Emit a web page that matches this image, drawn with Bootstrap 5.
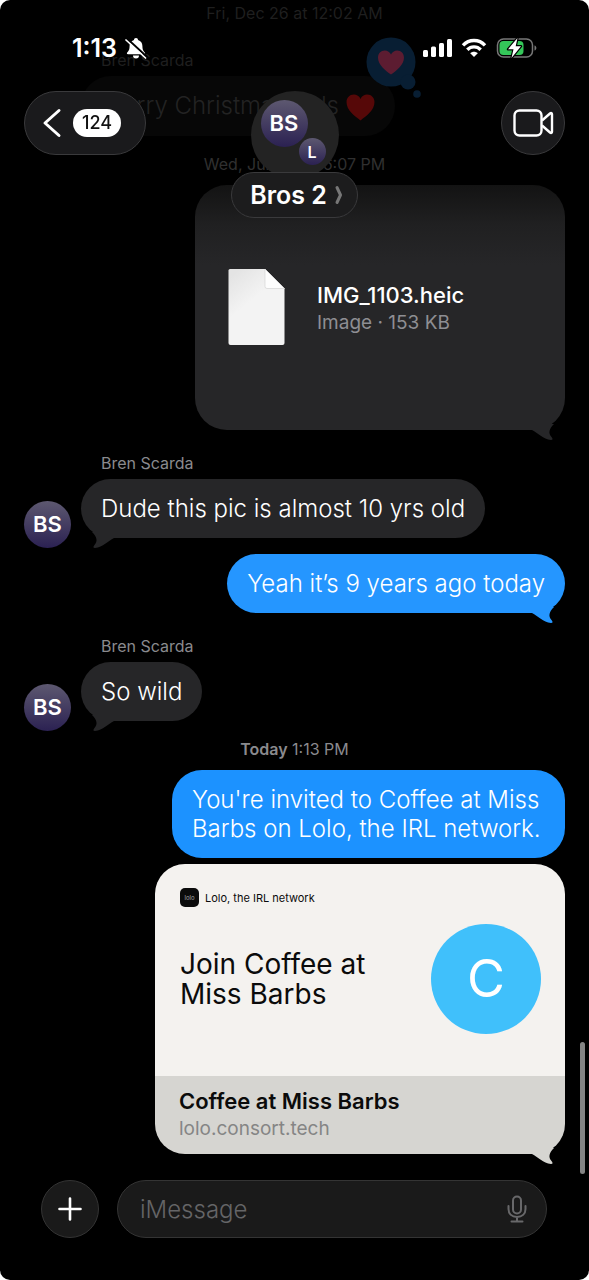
<!DOCTYPE html>
<html lang="en">
<head>
<meta charset="utf-8">
<meta name="viewport" content="width=device-width, initial-scale=1">
<title>Bros 2</title>
<link href="https://cdn.jsdelivr.net/npm/bootstrap@5.3.0/dist/css/bootstrap.min.css" rel="stylesheet">
<style>
  body { background: #fff; font-family: Inter, "Liberation Sans", sans-serif; }
  .phone { background: #000; color: #fff; border-radius: 10px; min-height: 100vh; }

  /* Floating header */
  .topbar { z-index: 3; padding-top: 36px; }
  .status { height: 24px; padding: 0 52px 0 72px; }
  .clock { font-size: 25px; line-height: 24px; font-weight: 600; }
  .navrow { display: grid; grid-template-columns: 1fr auto 1fr; align-items: start; padding: 31px 24px 0; }
  .glass { background: rgba(27, 27, 29, .96); border: 1px solid #3a3a3c; color: #fff; backdrop-filter: blur(6px); }
  .back { height: 64px; padding: 0 24px 0 16px; border-radius: 32px; }
  .count { background: #fff; color: #111; font-size: 18px; line-height: 28px; border-radius: 14px; padding: 0 9px; font-weight: 500; }
  .call { width: 64px; height: 64px; }
  .group-pic { width: 88px; height: 88px; background: #232323; }
  .group-name { height: 46px; margin-top: -7px; padding: 0 14px 0 18px; border-radius: 23px; font-size: 25px; line-height: 28px; font-weight: 600; background: #1c1c1d; }

  .initials { background: linear-gradient(#5d5870, #2b2152); color: #fff; font-weight: 600; width: 47px; height: 47px; font-size: 22px; }
  .pic-main { left: 10px; top: 9px; }
  .pic-second { left: 48px; top: 47px; width: 27px; height: 27px; font-size: 16px; }

  /* Conversation */
  .thread { padding: 3px 24px 0; }
  .stamp { margin: 18px 0 11px; font-size: 16px; line-height: 20px; color: #8a8a8e; text-align: center; }
  .sender { margin: 23px 0 6px; padding-left: 77px; font-size: 16px; line-height: 20px; color: #8a8a8e; }
  .faded { color: #1f1f1f; }
  .dim { color: #303030; }
  .line-row { gap: 10px; }
  .line-row .initials { margin-bottom: -10px; }
  .bubble { position: relative; background: #262628; border-radius: 30px; padding: 15px 20px; font-size: 24px; line-height: 29px; font-weight: 350; max-width: 77%; }
  .bubble.mine { background: #2596ff; max-width: 393px; }
  .bubble.mine.later { background: #1c92ff; }
  .bubble.old { background: #070707; color: #232323; }
  .tail { position: absolute; right: 10px; bottom: -10px; width: 26px; height: 16px; fill: #262628; }
  .tail.left { right: auto; left: 10px; transform: scaleX(-1); }
  .mine .tail { fill: #2596ff; }
  .tapback { position: absolute; right: -28px; top: -40px; }

  .filebox { position: relative; width: 370px; max-width: 75%; min-height: 245px; border-radius: 32px; padding: 0 33px; background: linear-gradient(#131313, #202021 40px, #262628 80px); color: #fff; }
  .filename { font-size: 22px; line-height: 28px; font-weight: 500; }
  .subline { font-size: 19px; line-height: 28px; color: #8e8e93; }

  .preview { position: relative; width: 410px; max-width: 76%; margin-top: 6px; color: #0b0b0b; }
  .preview .tail { fill: #d6d5d1; }
  .preview-top { background: #f4f2ef; border-radius: 30px 30px 0 0; padding: 24px 24px 42px 25px; }
  .brand { font-size: 11px; line-height: 20px; gap: 6px; }
  .brand-icon { width: 19px; height: 19px; border-radius: 5px; background: #0b0b0b; color: #aaa; font-size: 6px; }
  .invite { font-size: 28px; line-height: 30px; }
  .disc { width: 110px; height: 110px; background: #40c0fb; color: #fff; font-size: 52px; }
  .preview-foot { background: #d6d5d1; border-radius: 0 0 30px 30px; padding: 11px 24px; }
  .preview-foot .subline { color: #858585; }
  .scrollmark { right: 4px; bottom: -19px; width: 5px; height: 132px; border-radius: 3px; background: #848484; }

  /* Composer */
  .composer { padding: 25px 42px 42px 41px; gap: 18px; }
  .plus { width: 58px; height: 58px; background: #1a1a1a; border: 1px solid #343434; }
  .field { min-width: 0; height: 58px; background: #1a1a1a; border: 1px solid #343434; border-radius: 29px; padding: 0 18px 0 22px; }
  .field input { background: none; border: 0; outline: 0; color: #fff; font-size: 24px; line-height: 29px; font-weight: 350; min-width: 0; padding: 0; }
  .field input::placeholder { color: #656567; opacity: 1; }
</style>
</head>
<body>
<svg width="0" height="0" class="position-absolute" aria-hidden="true">
  <symbol id="tail" viewBox="0 0 26 16"><path d="M3 6C9 9 14 15 22 16C24 16 24 15 22.500 13C19 9 20 5 25 0L3 0Z"/></symbol>
  <symbol id="heart" viewBox="0 0 28 26"><path d="M14 25.500C8 21 .5 15.500 .5 8C.5 3.500 3.500 .5 7.500 .5C10.500 .5 13 2.200 14 4.800C15 2.200 17.500 .5 20.500 .5C24.500 .5 27.500 3.500 27.500 8C27.500 15.500 20 21 14 25.500Z"/></symbol>
</svg>

<div class="phone position-relative d-flex flex-column">
  <header class="topbar position-absolute top-0 start-0 end-0">
    <div class="status d-flex align-items-center justify-content-between">
      <div class="d-flex align-items-center gap-2">
        <span class="clock">1:13</span>
        <svg width="22" height="22" viewBox="0 0 22 22" aria-label="Silent">
          <path d="M11 1C9.700 1 9 1.900 9 3C6 4 4.600 6 4.600 9C4.600 13 3.500 14 2.200 15.500C1.500 16.500 2 17.200 3 17.200H19C20 17.200 20.500 16.500 19.800 15.500C18.500 14 17.400 13 17.400 9C17.400 6 16 4 13 3C13 1.900 12.300 1 11 1ZM8 18.500A3 3 0 0 0 14 18.500Z" fill="#fff"/>
          <path d="M2.500 2L21.500 19.500" stroke="#000" stroke-width="2"/>
          <path d="M1 3L20.500 21" stroke="#fff" stroke-width="1.700" stroke-linecap="round"/>
        </svg>
      </div>
      <div class="d-flex align-items-center">
        <svg width="30" height="20" viewBox="0 0 30 20" fill="#fff" aria-label="Signal"><rect x="0" y="12" width="5" height="7" rx="1.500"/><rect x="8" y="8.500" width="5" height="10.500" rx="1.500"/><rect x="16" y="5" width="5" height="14" rx="1.500"/><rect x="24" y="1" width="5" height="18" rx="1.500"/></svg>
        <svg class="ms-2 me-2" width="26" height="20" viewBox="0 0 26 20" fill="none" stroke="#fff" stroke-width="3.400" aria-label="Wi-Fi"><path d="M2 7.300C8 .8 18 .8 24 7.300"/><path d="M6.300 11.700C10 7.900 16 7.900 19.700 11.700"/><path d="M13 19L9.200 15.200C11.300 13.200 14.700 13.200 16.800 15.200Z" fill="#fff" stroke="none"/></svg>
        <svg width="42" height="22" viewBox="0 0 42 22" aria-label="Charging">
          <rect x="2.500" y="2" width="35" height="18" rx="6" fill="none" stroke="#777" stroke-width="1.500"/>
          <path d="M39.500 8.500C42 9 42 13 39.500 13.500Z" fill="#777"/>
          <rect x="4.500" y="4" width="24" height="14" rx="4" fill="#34c759"/>
          <path d="M22.500 1L13 12.300H18.500L16.500 21L26 9.300H20.700Z" fill="#fff" stroke="#000" stroke-width="2.400" paint-order="stroke" stroke-linejoin="round"/>
        </svg>
      </div>
    </div>

    <nav class="navrow">
      <div>
        <button type="button" class="glass back d-inline-flex align-items-center gap-2" aria-label="Back, 124 unread">
          <svg width="24" height="30" viewBox="0 0 24 30" fill="none" stroke="#fff" stroke-width="3" stroke-linecap="round" stroke-linejoin="round"><path d="M18 2.500L4 15L18 27.500"/></svg>
          <span class="count">124</span>
        </button>
      </div>
      <div class="d-flex flex-column align-items-center">
        <div class="group-pic rounded-circle position-relative">
          <span class="initials pic-main rounded-circle position-absolute d-flex align-items-center justify-content-center">BS</span>
          <span class="initials pic-second rounded-circle position-absolute d-flex align-items-center justify-content-center">L</span>
        </div>
        <button type="button" class="glass group-name position-relative d-flex align-items-center gap-2">Bros 2
          <svg width="8" height="20" viewBox="0 0 8 20" fill="none" stroke="#777" stroke-width="3" stroke-linecap="round" stroke-linejoin="round"><path d="M2 2.500L5.500 10L2 17.500"/></svg>
        </button>
      </div>
      <div class="text-end">
        <button type="button" class="glass call rounded-circle d-inline-flex align-items-center justify-content-center p-0" aria-label="Video call">
          <svg width="42" height="30" viewBox="0 0 42 30" fill="none" stroke="#fff" stroke-width="2.400" stroke-linejoin="round"><rect x="2.500" y="2.500" width="27" height="25" rx="5"/><path d="M30 12.500L38 5.500C39 4.700 40 5 40 6.300V23.700C40 25 39 25.300 38 24.500L30 17.500"/></svg>
        </button>
      </div>
    </nav>
  </header>

  <main class="thread position-relative flex-grow-1">
    <div class="stamp mt-0 pb-1 faded">Fri, Dec 26 at 12:02 AM</div>
    <div class="sender faded">Bren Scarda</div>
    <div class="line-row d-flex align-items-end">
      <span class="initials rounded-circle invisible"></span>
      <div class="bubble old">Merry Christmas lads <svg width="29" height="27" fill="#560808" aria-label="Heart"><use href="#heart"/></svg>
        <svg class="tapback" width="58" height="64" viewBox="0 0 58 64" aria-label="Loved">
          <g fill="#081e33"><circle cx="26" cy="26" r="24.500"/><circle cx="43" cy="46" r="7.500"/><circle cx="52" cy="58" r="3.800"/></g>
          <svg x="12" y="14" width="28" height="25" fill="#5c1c31"><use href="#heart"/></svg>
        </svg>
      </div>
    </div>

    <div class="stamp dim">Wed, Jun 24 at 6:07 PM</div>
    <div class="d-flex justify-content-end">
      <a href="#" class="filebox d-flex align-items-center text-decoration-none">
        <svg class="flex-shrink-0" width="57" height="78" viewBox="0 0 57 78">
          <defs><linearGradient id="paper" x1=".2" y1="0" x2=".8" y2="1"><stop offset="0" stop-color="#e4e4e4"/><stop offset=".4" stop-color="#f3f3f3"/></linearGradient></defs>
          <path d="M2 1H37L56.500 20.500V75Q56.500 77 54.500 77H2.500Q.5 77 .5 75V2.500Q.5 1 2 1Z" fill="url(#paper)"/>
          <path d="M37 1L56.500 20.500H39Q37 20.500 37 18.500Z" fill="#fdfdfd" stroke="#d4d4d4" stroke-width=".7"/>
        </svg>
        <div class="ps-3 ms-3 pt-1">
          <div class="filename">IMG_1103.heic</div>
          <div class="subline">Image · 153 KB</div>
        </div>
        <svg class="tail"><use href="#tail"/></svg>
      </a>
    </div>

    <div class="sender">Bren Scarda</div>
    <div class="line-row d-flex align-items-end">
      <span class="initials rounded-circle d-flex align-items-center justify-content-center">BS</span>
      <div class="bubble">Dude this pic is almost 10 yrs old<svg class="tail left"><use href="#tail"/></svg></div>
    </div>
    <div class="d-flex justify-content-end mt-3">
      <div class="bubble mine">Yeah it’s 9 years ago today<svg class="tail"><use href="#tail"/></svg></div>
    </div>

    <div class="sender">Bren Scarda</div>
    <div class="line-row d-flex align-items-end">
      <span class="initials rounded-circle d-flex align-items-center justify-content-center">BS</span>
      <div class="bubble">So wild<svg class="tail left"><use href="#tail"/></svg></div>
    </div>

    <div class="stamp"><span class="fw-semibold">Today</span> 1:13 PM</div>
    <div class="d-flex justify-content-end">
      <div class="bubble mine later">You're invited to Coffee at Miss Barbs on Lolo, the IRL network.</div>
    </div>
    <div class="d-flex justify-content-end">
      <a href="#" class="preview d-block text-decoration-none">
        <div class="preview-top">
          <div class="brand d-flex align-items-center"><span class="brand-icon d-flex align-items-center justify-content-center">lolo</span>Lolo, the IRL network</div>
          <div class="d-flex align-items-center justify-content-between pt-3">
            <div class="invite">Join Coffee at<br>Miss Barbs</div>
            <div class="disc rounded-circle d-flex align-items-center justify-content-center flex-shrink-0">C</div>
          </div>
        </div>
        <div class="preview-foot">
          <div class="filename fw-semibold">Coffee at Miss Barbs</div>
          <div class="subline">lolo.consort.tech</div>
        </div>
        <svg class="tail"><use href="#tail"/></svg>
      </a>
    </div>
    <div class="scrollmark position-absolute"></div>
  </main>

  <form class="composer d-flex align-items-center">
    <button type="button" class="plus rounded-circle d-flex align-items-center justify-content-center flex-shrink-0 p-0" aria-label="Add">
      <svg width="24" height="24" viewBox="0 0 24 24" stroke="#fff" stroke-width="2.600" stroke-linecap="round"><path d="M12 1.500V22.500M1.500 12H22.500"/></svg>
    </button>
    <div class="field d-flex align-items-center flex-grow-1">
      <input type="text" class="flex-grow-1" placeholder="iMessage" aria-label="iMessage">
      <button type="button" class="btn p-0 border-0 d-flex" aria-label="Dictate">
        <svg width="22" height="28" viewBox="0 0 22 28" fill="none" stroke="#68686a" stroke-width="2" stroke-linecap="round"><rect x="7" y="1.500" width="8" height="17" rx="4"/><path d="M2.500 11V14C2.500 19 6 22 11 22S19.500 19 19.500 14V11M11 22V26.500M5.500 26.500H16.500"/></svg>
      </button>
    </div>
  </form>
</div>
<script src="https://cdn.jsdelivr.net/npm/bootstrap@5.3.0/dist/js/bootstrap.bundle.min.js"></script>
</body>
</html>
